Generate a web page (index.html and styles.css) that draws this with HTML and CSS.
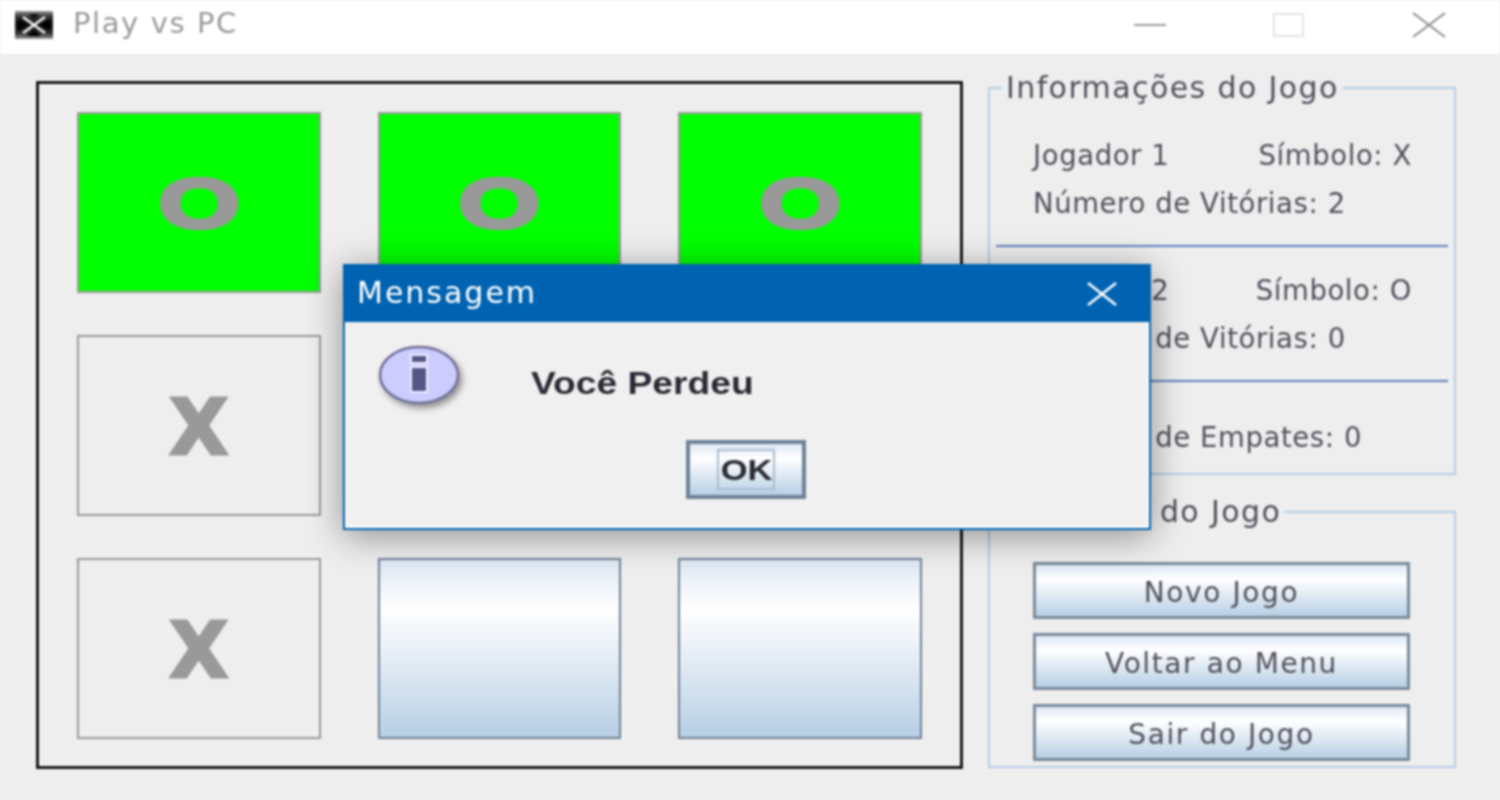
FILE: index.html
```html
<!DOCTYPE html>
<html lang="pt-BR">
<head>
    <meta charset="UTF-8">
    <title>Play vs PC</title>
    <link rel="stylesheet" href="styles.css">
</head>
<body>

    <div class="window">
        <!-- Title bar -->
        <header class="titlebar">
            <svg class="app-icon" width="38" height="28" viewBox="0 0 38 28">
                <defs>
                    <linearGradient id="band" x1="0" y1="0" x2="0" y2="1">
                        <stop offset="0" stop-color="#9a9a9a"/>
                        <stop offset="0.2" stop-color="#333"/>
                        <stop offset="0.5" stop-color="#111"/>
                        <stop offset="0.8" stop-color="#333"/>
                        <stop offset="1" stop-color="#9a9a9a"/>
                    </linearGradient>
                </defs>
                <rect width="38" height="28" fill="url(#band)"/>
                <path d="M3 8 L13 14 L3 20 Z M35 8 L25 14 L35 20 Z" fill="#000"/>
                <path d="M8 6 L30 22 M30 6 L8 22" stroke="#f4f4f4" stroke-width="2.5"/>
                <path d="M12 25 L19 19 L26 25 Z" fill="#000"/>
                <path d="M14 3 L19 8 L24 3 Z" fill="#111"/>
            </svg>
            <span class="window-title">Play vs PC</span>
            <div class="window-controls">
                <svg width="32" height="4" viewBox="0 0 32 4"><path d="M0 2 H32" stroke="#999" stroke-width="2"/></svg>
                <svg width="32" height="24" viewBox="0 0 32 24"><rect x="1" y="1" width="29" height="22" fill="none" stroke="#e4e4e4" stroke-width="2"/></svg>
                <svg width="34" height="26" viewBox="0 0 34 26"><path d="M1 1 L33 25 M33 1 L1 25" stroke="#8c8c8c" stroke-width="2"/></svg>
            </div>
        </header>

        <main class="content">
            <!-- Game board -->
            <section class="board">
                <button class="cell cell-win"><span class="mark mark-o">O</span></button>
                <button class="cell cell-win"><span class="mark mark-o">O</span></button>
                <button class="cell cell-win"><span class="mark mark-o">O</span></button>
                <button class="cell cell-played"><span class="mark mark-x">X</span></button>
                <button class="cell cell-empty"></button>
                <button class="cell cell-empty"></button>
                <button class="cell cell-played"><span class="mark mark-x">X</span></button>
                <button class="cell cell-empty"></button>
                <button class="cell cell-empty"></button>
            </section>

            <aside class="side">
                <fieldset class="group group-info">
                    <legend>Informações do Jogo</legend>
                    <div class="player">
                        <div class="info-row"><span>Jogador 1</span><span>Símbolo: X</span></div>
                        <div class="info-row"><span>Número de Vitórias: 2</span></div>
                    </div>
                    <hr class="divider">
                    <div class="player">
                        <div class="info-row"><span>Jogador 2</span><span>Símbolo: O</span></div>
                        <div class="info-row"><span>Número de Vitórias: 0</span></div>
                    </div>
                    <hr class="divider">
                    <div class="draws">
                        <div class="info-row"><span>Número de Empates: 0</span></div>
                    </div>
                </fieldset>

                <fieldset class="group group-options">
                    <legend>Opções do Jogo</legend>
                    <button class="action">Novo Jogo</button>
                    <button class="action">Voltar ao Menu</button>
                    <button class="action">Sair do Jogo</button>
                </fieldset>
            </aside>
        </main>

        <!-- Message dialog -->
        <div class="dialog">
            <div class="dialog-title">
                <span>Mensagem</span>
                <svg width="30" height="24" viewBox="0 0 30 24"><path d="M1 1 L29 23 M29 1 L1 23" stroke="#fff" stroke-width="2.5"/></svg>
            </div>
            <div class="dialog-body">
                <div class="dialog-message">
                    <svg class="info-icon" width="84" height="64" viewBox="0 0 84 64">
                        <ellipse cx="41" cy="32" rx="39" ry="28" fill="#ccccff" stroke="#6f6f99" stroke-width="2.5"/>
                        <rect x="33" y="12" width="16" height="8" fill="#555588" stroke="#f0f0ff" stroke-width="2"/>
                        <rect x="33" y="24" width="16" height="25" fill="#555588" stroke="#f0f0ff" stroke-width="2"/>
                    </svg>
                    <strong>Você Perdeu</strong>
                </div>
                <button class="ok-button"><span class="ok-focus"><span class="ok-label">OK</span></span></button>
            </div>
        </div>
    </div>

</body>
</html>
```

FILE: styles.css
```css
/* General page styles */
html, body {
    margin: 0;
    padding: 0;
    height: 800px;
    overflow: hidden;
}
body {
    font-family: "DejaVu Sans", sans-serif;
    background-color: #eeeeee;
    color: #50505c;
}
button {
    font-family: inherit;
    padding: 0;
    margin: 0;
}
.window {
    position: relative;
    width: 1500px;
    height: 800px;
    background-color: #eeeeee;
    filter: blur(0.8px);
}
/* Title bar */
.titlebar {
    height: 54px;
    background-color: #ffffff;
    display: flex;
    align-items: center;
    padding-left: 15px;
    box-sizing: border-box;
}
.app-icon {
    margin-top: -5px;
}
.window-title {
    margin-left: 20px;
    margin-top: -8px;
    font-size: 29px;
    letter-spacing: 1.6px;
    color: #9a9a9f;
}
.window-controls {
    margin-left: auto;
    margin-right: 54px;
    margin-top: -5px;
    display: flex;
    align-items: center;
    gap: 107px;
}
/* Main layout */
.content {
    display: flex;
    align-items: flex-start;
    gap: 25px;
    padding: 27px 0 0 36px;
}
.board {
    box-sizing: border-box;
    width: 927px;
    height: 688px;
    border: 3px solid #111;
    box-shadow: 0 0 0 1px #fff, inset 0 0 0 1px #fff;
    padding: 28px 38px;
    display: grid;
    grid-template-columns: repeat(3, 243.5px);
    grid-template-rows: repeat(3, 181px);
    column-gap: 57px;
    row-gap: 42px;
}
/* Board cells */
.cell {
    box-sizing: border-box;
    border: 2px solid #999999;
    display: flex;
    align-items: center;
    justify-content: center;
    overflow: hidden;
}
.cell-win {
    background: #00ff00;
    border-color: #a098a0;
}
.cell-played {
    background: #eeeeee;
}
.cell-empty {
    background: linear-gradient(to bottom, #dde8f3 0%, #ffffff 28%, #b8cfe5 100%);
    border-color: #6f8295;
}
.mark {
    font-weight: bold;
    color: #999999;
    line-height: 1;
}
.mark-o {
    font-family: "Liberation Sans", sans-serif;
    font-size: 70px;
    -webkit-text-stroke: 3.5px #999999;
    transform: scaleX(1.5);
    padding-top: 2px;
}
.mark-x {
    font-size: 76px;
    -webkit-text-stroke: 3px #999999;
    padding-top: 5px;
}
/* Side panels */
.side {
    width: 468px;
    display: flex;
    flex-direction: column;
}
.group {
    box-sizing: border-box;
    margin: 0;
    min-width: 0;
    border: 2px solid #b3cbe5;
    padding: 0 6px;
}
.group legend {
    font-size: 30px;
    letter-spacing: 1.4px;
    line-height: 38px;
    padding: 0 4px 0 4px;
    margin-left: 6px;
}
.group-info {
    height: 406px;
    margin-top: -12px;
}
.group-options {
    height: 275px;
    margin-top: 18px;
    padding: 0 44px 0 43px;
    display: flex;
    flex-direction: column;
}
.group-options legend {
    margin-left: -8px;
}
.player + .divider + .player {
    padding-top: 17px;
}
.player:first-of-type {
    padding-top: 22px;
}
.info-row {
    display: flex;
    justify-content: space-between;
    font-size: 27.5px;
    letter-spacing: 0.6px;
    line-height: 48px;
    padding: 2px 36px 0 37px;
    height: 48px;
    box-sizing: border-box;
}
.divider {
    margin: 20px 0 0 0;
    border: 0;
    height: 2px;
    background-color: #5f7fc0;
}
.draws {
    padding-top: 29px;
}
/* Action buttons */
.action {
    box-sizing: border-box;
    height: 57px;
    margin-bottom: 14px;
    border: 3px solid #7a8a9a;
    padding-top: 3px;
    background: linear-gradient(to bottom, #dde8f3 0%, #ffffff 28%, #b8cfe5 100%);
    font-size: 28px;
    letter-spacing: 1.6px;
    color: #50505c;
}
.action:first-of-type {
    margin-top: 31px;
}
/* Dialog */
.dialog {
    position: absolute;
    left: 343px;
    top: 264px;
    width: 808px;
    height: 266px;
    box-sizing: border-box;
    border: 2px solid #0063b1;
    background-color: #f0f0f0;
    box-shadow: 0 6px 34px rgba(0, 0, 0, 0.4);
}
.dialog-title {
    height: 56px;
    background-color: #0063b1;
    color: #ffffff;
    display: flex;
    align-items: center;
    justify-content: space-between;
    padding: 0 32px 0 12px;
    font-size: 30px;
    letter-spacing: 2px;
}
.dialog-title span {
    margin-top: -4px;
}
.dialog-body {
    height: 206px;
    box-sizing: border-box;
    border: 2px solid #ffffff;
    border-top: 0;
    position: relative;
}
.dialog-message {
    display: flex;
    align-items: center;
    padding: 21px 0 0 31px;
}
.info-icon {
    filter: drop-shadow(3px 4px 3px rgba(0, 0, 0, 0.4));
    overflow: visible;
}
.dialog-message strong {
    font-family: "Liberation Sans", sans-serif;
    font-size: 31px;
    color: #2a2a35;
    margin-left: 69px;
    margin-top: 17px;
    transform: scaleX(1.2);
    transform-origin: left center;
}
.ok-button {
    position: absolute;
    left: 339px;
    top: 118px;
    width: 120px;
    height: 59px;
    box-sizing: border-box;
    border: 4px solid #6d8296;
    background: linear-gradient(to bottom, #dde8f3 0%, #ffffff 28%, #b8cfe5 100%);
    font-family: "Liberation Sans", sans-serif;
    font-size: 30px;
    font-weight: bold;
    color: #2a2a35;
    display: flex;
    align-items: center;
    justify-content: center;
}
.ok-focus {
    box-sizing: border-box;
    width: 58px;
    height: 41px;
    border: 2px solid #a9bdd0;
    display: flex;
    align-items: center;
    justify-content: center;
}
.ok-label {
    transform: scaleX(1.15);
}
```
